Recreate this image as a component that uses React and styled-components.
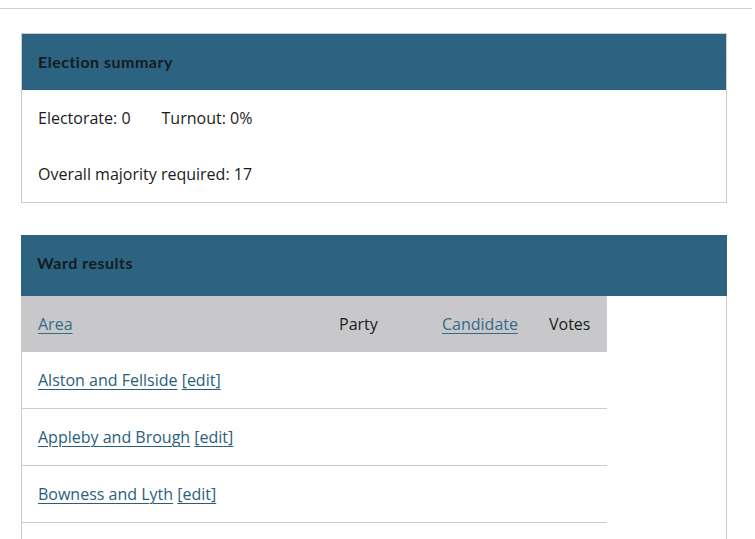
import React from "react";
import styled, { createGlobalStyle } from "styled-components";

const Global = createGlobalStyle`
  html, body { margin: 0; padding: 0; background: #fff; }
  body {
    font-family: "Open Sans", "Liberation Sans", sans-serif;
    font-size: 16px;
    line-height: 24px;
    color: #1b1b1b;
  }
`;

const TopRule = styled.div`
  width: 752px;
  height: 8px;
  border-bottom: 1px solid #cfcfcf;
`;

const Main = styled.main`
  width: 706px;
  padding: 24px 0 0 21px;
  display: flex;
  flex-direction: column;
  gap: 32px;
`;

const Panel = styled.section`
  border: 1px solid #cccccc;
  border-top: ${(p) => (p.$flush ? "none" : "1px solid #cccccc")};
  border-bottom: ${(p) => (p.$flush ? "none" : "1px solid #cccccc")};
`;

const PanelHeader = styled.h2`
  margin: ${(p) => (p.$flush ? "0 -1px" : "0")};
  height: ${(p) => p.$height}px;
  box-sizing: border-box;
  display: flex;
  align-items: center;
  padding: 0 16px ${(p) => p.$lift || 0}px;
  background: #2b6381;
  font-family: "Lato", "Liberation Sans", sans-serif;
  font-weight: 700;
  font-size: 16px;
  color: #161a1d;
  letter-spacing: 0.5px;
`;

const SummaryRow = styled.div`
  display: flex;
  gap: 31px;
  padding: 16px;
`;

const Table = styled.table`
  width: 585px;
  border-collapse: collapse;
  table-layout: fixed;
`;

const HeadRow = styled.tr`
  background: #c8c8ca;
`;

const Th = styled.th`
  height: 56px;
  padding: 0 16px;
  text-align: left;
  font-weight: 400;
  box-sizing: border-box;
`;

const Td = styled.td`
  height: 56px;
  padding: 0 16px;
  border-bottom: 1px solid #cccccc;
  white-space: nowrap;
`;

const Link = styled.a`
  color: #2a5e7c;
  text-decoration: underline;
  text-underline-offset: 3px;
  text-decoration-thickness: 1px;
`;

const HeadLink = styled(Link)`
  color: #356a8a;
`;

const wards = ["Alston and Fellside", "Appleby and Brough", "Bowness and Lyth", "Burton and Crooklands"];

export default function App() {
  return (
    <>
      <Global />
      <TopRule />
      <Main>
        <Panel>
          <PanelHeader $height={56}>Election summary</PanelHeader>
          <SummaryRow>
            <span>Electorate: 0</span>
            <span>Turnout: 0%</span>
          </SummaryRow>
          <SummaryRow>
            <span>Overall majority required: 17</span>
          </SummaryRow>
        </Panel>
        <Panel $flush>
          <PanelHeader $flush $height={61} $lift={5}>Ward results</PanelHeader>
          <Table>
            <colgroup>
              <col style={{ width: 301 }} />
              <col style={{ width: 103 }} />
              <col style={{ width: 107 }} />
              <col style={{ width: 74 }} />
            </colgroup>
            <thead>
              <HeadRow>
                <Th><HeadLink href="#">Area</HeadLink></Th>
                <Th>Party</Th>
                <Th><HeadLink href="#">Candidate</HeadLink></Th>
                <Th>Votes</Th>
              </HeadRow>
            </thead>
            <tbody>
              {wards.map((w) => (
                <tr key={w}>
                  <Td colSpan={4}>
                    <Link href="#">{w}</Link> <Link href="#">[edit]</Link>
                  </Td>
                </tr>
              ))}
            </tbody>
          </Table>
        </Panel>
      </Main>
    </>
  );
}
